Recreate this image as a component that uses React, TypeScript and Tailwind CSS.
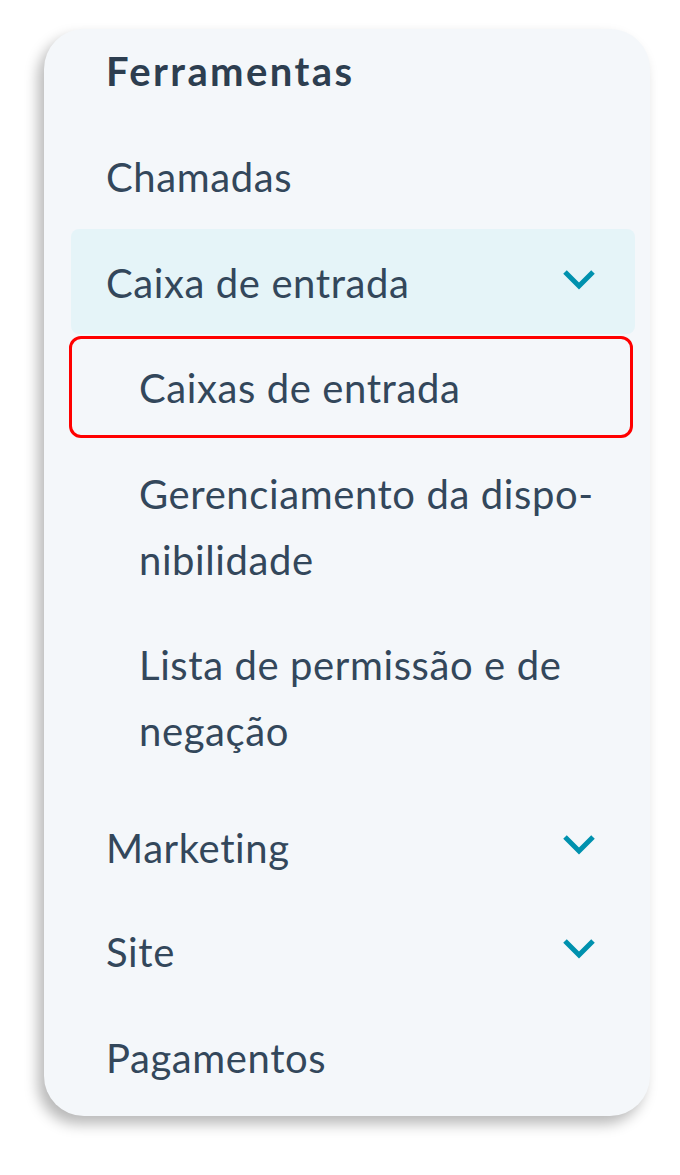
import React from 'react';

const Chevron: React.FC = () => (
    <svg width="36" height="22" viewBox="0 0 36 22" className="shrink-0 -translate-y-[4px]">
        <polyline points="4,4 18,18 32,4" fill="none" stroke="#0091ae" strokeWidth="5" />
    </svg>
);

interface NavItemProps {
    label: string;
    chevron?: boolean;
    className?: string;
}

const NavItem: React.FC<NavItemProps> = ({ label, chevron, className = '' }) => (
    <div className={`flex items-center justify-between pl-[35px] pr-[38px] py-[19px] ${className}`}>
        <span>{label}</span>
        {chevron && <Chevron />}
    </div>
);

const App: React.FC = () => {
    return (
        <div className="min-h-[1175px] w-[680px] bg-white pt-[29px] pl-[44px]">
            <div
                className="w-[606px] h-[1087px] rounded-[40px] bg-[#f4f7fa] shadow-[-6px_8px_14px_rgba(0,0,0,0.28)] pt-[9px] pl-[27px] pr-[15px] text-[#33475b] text-[40px] tracking-[0.6px] leading-[66px]"
                style={{ fontFamily: 'Lato, "Noto Sans", sans-serif' }}
            >
                <h2 className="pl-[35px] mb-[21px] font-bold tracking-[2.4px] text-[#2d3e50]">Ferramentas</h2>

                <NavItem label="Chamadas" />

                {/* open group */}
                <div className="flex items-center justify-between pl-[35px] pr-[38px] pt-[21px] pb-[18px] rounded-[8px] bg-[#e5f4f8]">
                    <span>Caixa de entrada</span>
                    <Chevron />
                </div>

                <div className="mb-[12px]">
                    <div className="relative mt-[2px] pl-[68px] pt-[19px] pb-[17px]">
                        <span>Caixas de entrada</span>
                        {/* annotation frame */}
                        <div className="absolute top-0 bottom-0 -left-[2px] right-[2px] rounded-[12px] border-[3px] border-[#ff0000]" />
                    </div>
                    <div className="pl-[68px] pr-[10px] pt-[23px] pb-[20px]">Gerenciamento da dispo-<br />nibilidade</div>
                    <div className="pl-[68px] pr-[10px] pt-[19px] pb-[20px]">Lista de permissão e de<br />negação</div>
                </div>

                <NavItem label="Marketing" chevron />
                <NavItem label="Site" chevron />
                <NavItem label="Pagamentos" className="pt-[21px]" />
            </div>
        </div>
    );
};

export default App;
